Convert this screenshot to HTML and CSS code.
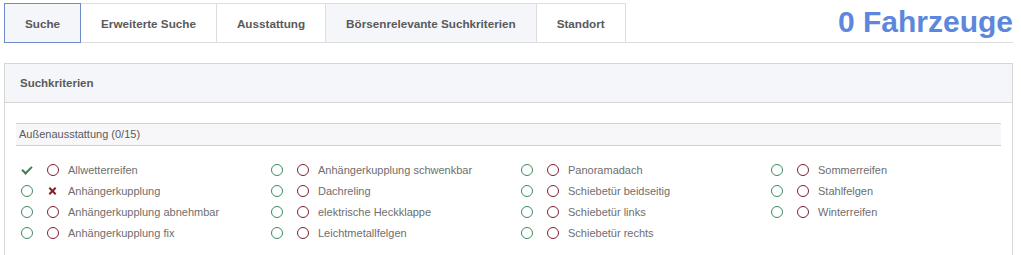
FILE: index.html
```html
<!DOCTYPE html>
<html lang="de">
<head>
    <meta charset="UTF-8">
    <title>Fahrzeugsuche</title>
    <link rel="stylesheet" href="styles.css">
</head>
<body>

<div class="topbar">
    <div class="tabs">
        <a href="#" class="tab active">Suche</a>
        <a href="#" class="tab">Erweiterte Suche</a>
        <a href="#" class="tab">Ausstattung</a>
        <a href="#" class="tab shaded">Börsenrelevante Suchkriterien</a>
        <a href="#" class="tab">Standort</a>
    </div>
    <div class="count">0 Fahrzeuge</div>
</div>

<div class="panel">
    <div class="panel-head">Suchkriterien</div>
    <div class="panel-body">
        <div class="group-head">Außenausstattung (0/15)</div>
        <div class="options">
            <ul class="col">
                <li><span class="yes on"></span><span class="no"></span>Allwetterreifen</li>
                <li><span class="yes"></span><span class="no on"></span>Anhängerkupplung</li>
                <li><span class="yes"></span><span class="no"></span>Anhängerkupplung abnehmbar</li>
                <li><span class="yes"></span><span class="no"></span>Anhängerkupplung fix</li>
            </ul>
            <ul class="col">
                <li><span class="yes"></span><span class="no"></span>Anhängerkupplung schwenkbar</li>
                <li><span class="yes"></span><span class="no"></span>Dachreling</li>
                <li><span class="yes"></span><span class="no"></span>elektrische Heckklappe</li>
                <li><span class="yes"></span><span class="no"></span>Leichtmetallfelgen</li>
            </ul>
            <ul class="col">
                <li><span class="yes"></span><span class="no"></span>Panoramadach</li>
                <li><span class="yes"></span><span class="no"></span>Schiebetür beidseitig</li>
                <li><span class="yes"></span><span class="no"></span>Schiebetür links</li>
                <li><span class="yes"></span><span class="no"></span>Schiebetür rechts</li>
            </ul>
            <ul class="col">
                <li><span class="yes"></span><span class="no"></span>Sommerreifen</li>
                <li><span class="yes"></span><span class="no"></span>Stahlfelgen</li>
                <li><span class="yes"></span><span class="no"></span>Winterreifen</li>
            </ul>
        </div>
    </div>
</div>

</body>
</html>
```

FILE: styles.css
```css
body {
    margin: 0;
    font-family: "Liberation Sans", Arial, sans-serif;
    background-color: #fff;
    color: #666;
}
.topbar {
    display: flex;
    justify-content: space-between;
    margin: 3px 8px 0 4px;
    border-bottom: 1px solid #ddd;
}
.tabs {
    display: flex;
}
.tab {
    display: block;
    height: 38px;
    line-height: 39px;
    padding: 0 20px;
    border: 1px solid #ddd;
    border-bottom: none;
    margin-left: -1px;
    font-size: 11.7px;
    font-weight: bold;
    color: #5a5a5a;
    text-decoration: none;
    background-color: #fff;
}
.tab:first-child {
    margin-left: 0;
}
.tab.shaded {
    background-color: #f5f6fa;
}
.tab.active {
    position: relative;
    z-index: 1;
    border: 1px solid #6f8bcb;
    margin-bottom: -1px;
    background-color: #f5f6fa;
}
.count {
    align-self: flex-start;
    line-height: 37px;
    font-size: 30px;
    font-weight: bold;
    color: #5d87dc;
}
.panel {
    margin: 20px 8px 0 4px;
    border: 1px solid #d6d6d6;
    height: 200px;
}
.panel-head {
    height: 38px;
    line-height: 39px;
    padding: 0 15px;
    background-color: #f5f6f9;
    border-bottom: 1px solid #d6d6d6;
    font-size: 11.5px;
    font-weight: bold;
    color: #5a5a5a;
}
.panel-body {
    padding: 20px 11px;
}
.group-head {
    height: 21px;
    line-height: 21px;
    padding-left: 3px;
    border-top: 1px solid #d2d2d2;
    border-bottom: 1px solid #d2d2d2;
    background-color: #f7f7fa;
    font-size: 11px;
    color: #5a5a5a;
}
.options {
    display: flex;
    margin-top: 13px;
}
.col {
    list-style: none;
    margin: 0;
    padding: 0;
    width: 250px;
    flex-shrink: 0;
}
.col li {
    display: flex;
    align-items: center;
    height: 21px;
    padding-left: 5px;
    font-size: 11px;
    color: #6e6e6e;
}
.yes, .no {
    display: block;
    box-sizing: border-box;
    width: 12px;
    height: 12px;
    border-radius: 50%;
    border: 1.5px solid #3f8a5e;
    margin: 0 14px 0 0;
}
.no {
    border-color: #7c2232;
    margin-right: 9px;
}
.yes.on, .no.on {
    border: none;
    border-radius: 0;
    position: relative;
}
.yes.on::after {
    content: "";
    position: absolute;
    left: 3px;
    top: 0;
    width: 4px;
    height: 8px;
    border-right: 2px solid #3f7f55;
    border-bottom: 2px solid #3f7f55;
    transform: rotate(45deg);
}
.no.on::before, .no.on::after {
    content: "";
    position: absolute;
    left: 1px;
    top: 5px;
    width: 9px;
    height: 2px;
    background-color: #8b1c2a;
    transform: rotate(45deg);
}
.no.on::after {
    transform: rotate(-45deg);
}
```
